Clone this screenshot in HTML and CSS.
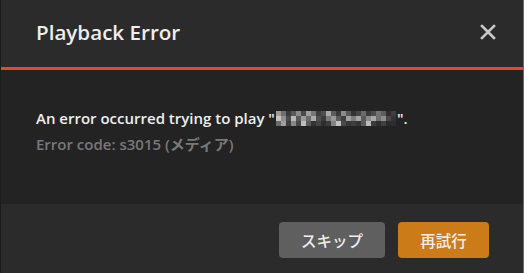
FILE: index.html
```html
<!DOCTYPE html>
<html lang="ja">
<head>
<meta charset="utf-8">
<title>Playback Error</title>
<link rel="stylesheet" href="styles.css">
</head>
<body>
<div class="dialog">
  <header class="dialog-header">
    <h1 class="dialog-title">Playback Error</h1>
    <button class="close-btn" aria-label="Close">
      <svg width="16" height="16" viewBox="0 0 16 16"><path d="M2 2 L14 14 M14 2 L2 14" stroke="#c8c8c8" stroke-width="2.6" stroke-linecap="square" fill="none"/></svg>
    </button>
  </header>
  <div class="dialog-body">
    <p class="msg">An error occurred trying to play "<svg class="mosaic" width="120" height="15" viewBox="0 0 120 15" shape-rendering="crispEdges">
      <rect x="0" y="0" width="5" height="5" fill="#9a9a9a"/><rect x="5" y="0" width="5" height="5" fill="#6e6e6e"/><rect x="10" y="0" width="5" height="5" fill="#3a3a3a"/><rect x="15" y="0" width="5" height="5" fill="#5a5a5a"/><rect x="20" y="0" width="5" height="5" fill="#8a8a8a"/><rect x="25" y="0" width="5" height="5" fill="#4a4a4a"/><rect x="30" y="0" width="5" height="5" fill="#9e9e9e"/><rect x="35" y="0" width="5" height="5" fill="#777"/><rect x="40" y="0" width="5" height="5" fill="#3c3c3c"/><rect x="45" y="0" width="5" height="5" fill="#4e4e4e"/><rect x="50" y="0" width="5" height="5" fill="#a8a8a8"/><rect x="55" y="0" width="5" height="5" fill="#5c5c5c"/><rect x="60" y="0" width="5" height="5" fill="#3a3a3a"/><rect x="65" y="0" width="5" height="5" fill="#8c8c8c"/><rect x="70" y="0" width="5" height="5" fill="#565656"/><rect x="75" y="0" width="5" height="5" fill="#333"/><rect x="80" y="0" width="5" height="5" fill="#444"/><rect x="85" y="0" width="5" height="5" fill="#6a6a6a"/><rect x="90" y="0" width="5" height="5" fill="#3a3a3a"/><rect x="95" y="0" width="5" height="5" fill="#4c4c4c"/><rect x="100" y="0" width="5" height="5" fill="#727272"/><rect x="105" y="0" width="5" height="5" fill="#5e5e5e"/><rect x="110" y="0" width="5" height="5" fill="#2e2e2e"/><rect x="115" y="0" width="5" height="5" fill="#3e3e3e"/>
      <rect x="0" y="5" width="5" height="5" fill="#c4c4c4"/><rect x="5" y="5" width="5" height="5" fill="#8e8e8e"/><rect x="10" y="5" width="5" height="5" fill="#4a4a4a"/><rect x="15" y="5" width="5" height="5" fill="#b8b8b8"/><rect x="20" y="5" width="5" height="5" fill="#5a5a5a"/><rect x="25" y="5" width="5" height="5" fill="#9a9a9a"/><rect x="30" y="5" width="5" height="5" fill="#6a6a6a"/><rect x="35" y="5" width="5" height="5" fill="#aaa"/><rect x="40" y="5" width="5" height="5" fill="#505050"/><rect x="45" y="5" width="5" height="5" fill="#3a3a3a"/><rect x="50" y="5" width="5" height="5" fill="#7a7a7a"/><rect x="55" y="5" width="5" height="5" fill="#989898"/><rect x="60" y="5" width="5" height="5" fill="#5a5a5a"/><rect x="65" y="5" width="5" height="5" fill="#3e3e3e"/><rect x="70" y="5" width="5" height="5" fill="#a0a0a0"/><rect x="75" y="5" width="5" height="5" fill="#7c7c7c"/><rect x="80" y="5" width="5" height="5" fill="#a4a4a4"/><rect x="85" y="5" width="5" height="5" fill="#5a5a5a"/><rect x="90" y="5" width="5" height="5" fill="#8a8a8a"/><rect x="95" y="5" width="5" height="5" fill="#a8a8a8"/><rect x="100" y="5" width="5" height="5" fill="#6e6e6e"/><rect x="105" y="5" width="5" height="5" fill="#8c8c8c"/><rect x="110" y="5" width="5" height="5" fill="#484848"/><rect x="115" y="5" width="5" height="5" fill="#333"/>
      <rect x="0" y="10" width="5" height="5" fill="#6a6a6a"/><rect x="5" y="10" width="5" height="5" fill="#a0a0a0"/><rect x="10" y="10" width="5" height="5" fill="#3e3e3e"/><rect x="15" y="10" width="5" height="5" fill="#888"/><rect x="20" y="10" width="5" height="5" fill="#474747"/><rect x="25" y="10" width="5" height="5" fill="#bdbdbd"/><rect x="30" y="10" width="5" height="5" fill="#5a5a5a"/><rect x="35" y="10" width="5" height="5" fill="#333"/><rect x="40" y="10" width="5" height="5" fill="#444"/><rect x="45" y="10" width="5" height="5" fill="#2e2e2e"/><rect x="50" y="10" width="5" height="5" fill="#3c3c3c"/><rect x="55" y="10" width="5" height="5" fill="#848484"/><rect x="60" y="10" width="5" height="5" fill="#c0c0c0"/><rect x="65" y="10" width="5" height="5" fill="#4a4a4a"/><rect x="70" y="10" width="5" height="5" fill="#383838"/><rect x="75" y="10" width="5" height="5" fill="#3e3e3e"/><rect x="80" y="10" width="5" height="5" fill="#343434"/><rect x="85" y="10" width="5" height="5" fill="#5c5c5c"/><rect x="90" y="10" width="5" height="5" fill="#bababa"/><rect x="95" y="10" width="5" height="5" fill="#3c3c3c"/><rect x="100" y="10" width="5" height="5" fill="#2e2e2e"/><rect x="105" y="10" width="5" height="5" fill="#404040"/><rect x="110" y="10" width="5" height="5" fill="#2a2a2a"/><rect x="115" y="10" width="5" height="5" fill="#2e2e2e"/>
    </svg>".</p>
    <p class="code">Error code: s3015 (メディア)</p>
  </div>
  <footer class="dialog-footer">
    <button class="btn btn-skip">スキップ</button>
    <button class="btn btn-retry">再試行</button>
  </footer>
</div>
</body>
</html>
```
FILE: styles.css
```css
html, body {
  margin: 0;
  padding: 0;
  background: #232323;
}
body {
  font-family: "Open Sans", "Noto Sans CJK JP", sans-serif;
}
.dialog {
  width: 524px;
  height: 273px;
  box-sizing: border-box;
  display: flex;
  flex-direction: column;
  border-left: 1px solid #1b1b1b;
  border-right: 1px solid #6c6c6c;
}
.dialog-header {
  box-sizing: border-box;
  background: #2b2b2b;
  border-bottom: 3px solid #e8492b;
  display: flex;
  align-items: center;
  justify-content: space-between;
  padding: 0 27px 0 35px;
  flex: none;
  height: 70px;
}
.dialog-title {
  margin: 0;
  font-size: 20.6px;
  font-weight: 600;
  color: #eeeeee;
  line-height: 24px;
  padding-bottom: 3px;
}
.close-btn {
  background: none;
  border: 0;
  padding: 0;
  width: 16px;
  height: 16px;
  display: flex;
  margin-bottom: 3px;
}
.dialog-body {
  flex: 1;
  background: #232323;
  padding: 38px 35px 0;
}
.msg {
  margin: 0;
  font-size: 15px;
  font-weight: 600;
  color: #eeeeee;
  line-height: 20px;
  display: flex;
  align-items: center;
  white-space: nowrap;
}
.mosaic {
  display: block;
  margin: 0 1px;
}
.code {
  margin: 6px 0 0;
  font-size: 15px;
  font-weight: 600;
  color: #787878;
  line-height: 20px;
}
.dialog-footer {
  height: 69px;
  flex: none;
  box-sizing: border-box;
  background: #2b2b2b;
  display: flex;
  justify-content: flex-end;
  gap: 13px;
  padding: 18px 34px 0 0;
}
.btn {
  height: 36px;
  border: 0;
  border-radius: 4px;
  font-family: "Open Sans", "Noto Sans CJK JP", sans-serif;
  font-size: 15.5px;
  font-weight: 500;
  color: #eeeeee;
  padding: 0;
}
.btn-skip {
  width: 106px;
  background: #5f5f5f;
}
.btn-retry {
  width: 91px;
  background: #cc7b19;
}
```
